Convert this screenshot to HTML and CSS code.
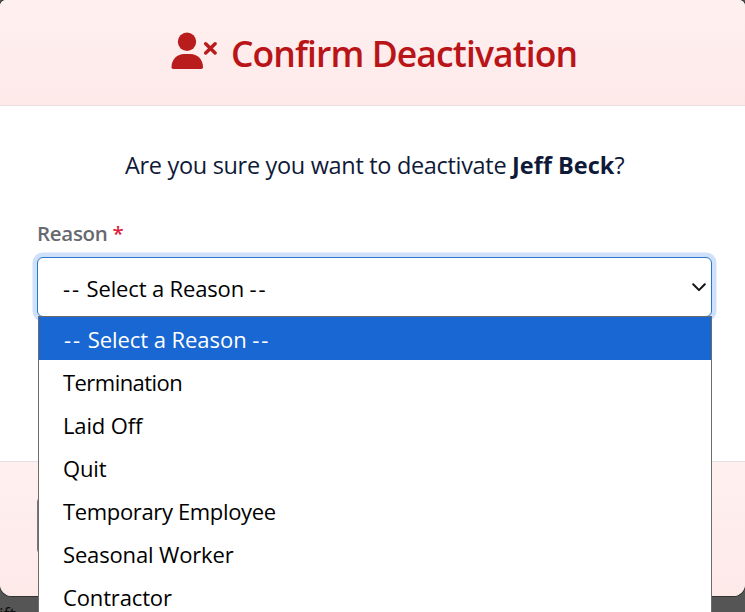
FILE: index.html
```html
<!DOCTYPE html>
<html lang="en">
<head>
<meta charset="utf-8">
<title>Confirm Deactivation</title>
<link rel="stylesheet" href="styles.css">
</head>
<body>
<div class="backdrop-text">ift</div>
<section class="modal">
  <header class="modal-header">
    <svg class="user-icon" viewBox="0 0 46 38" width="46" height="38" aria-hidden="true">
      <circle cx="16" cy="9.7" r="9.2"/>
      <path d="M.5 35.200C.5 27 6.500 22 13 22H19.500C26 22 32 27 32 35.200Q32 37 30.200 37H2.300Q.5 37 .5 35.200Z"/>
      <path class="cross" d="M34.700 11.700 44.100 21M44.100 11.700 34.700 21"/>
    </svg>
    <h1 class="title">Confirm Deactivation</h1>
  </header>
  <main class="modal-body">
    <p class="question"><span class="ask">Are you sure you want to deactivate</span> <strong>Jeff Beck</strong>?</p>
    <div class="label">Reason <span class="required">*</span></div>
    <div class="select">
      <span class="value"><span class="dash">--</span> Select a Reason <span class="dash">--</span></span>
      <svg class="chevron" viewBox="0 0 14 9" width="14" height="9" aria-hidden="true"><path d="M1.200 1.300 7 7.100 12.800 1.300"/></svg>
      <ul class="options">
        <li class="option selected"><span class="dash">--</span> Select a Reason <span class="dash">--</span></li>
        <li class="option tight">Termination</li>
        <li class="option">Laid Off</li>
        <li class="option">Quit</li>
        <li class="option snug">Temporary Employee</li>
        <li class="option">Seasonal Worker</li>
        <li class="option">Contractor</li>
      </ul>
    </div>
  </main>
  <footer class="modal-footer"><div class="cancel"></div></footer>
</section>
</body>
</html>
```
FILE: styles.css
```css
* { box-sizing: border-box; }
body {
  margin: 0;
  height: 612px;
  overflow: hidden;
  position: relative;
  background: #555;
  font-family: "Open Sans", "Noto Sans", sans-serif;
}
.backdrop-text {
  position: absolute;
  left: -1px;
  top: 604px;
  font-size: 18px;
  line-height: 20px;
  color: #111;
}
.modal {
  position: relative;
  height: 596px;
  display: flex;
  flex-direction: column;
  background: #fff;
  border-radius: 6px 6px 12px 12px;
  box-shadow: 0 0 0 1px #333;
}
.modal-header {
  height: 106px;
  padding: 32px 0 0 171px;
  display: flex;
  align-items: flex-start;
  background: linear-gradient(#fff0f0, #fee9e9);
  border-bottom: 1px solid #eadfe3;
  border-radius: 6px 6px 0 0;
}
.user-icon { fill: #b91c1c; flex: none; }
.cross { stroke: #b91c1c; stroke-width: 3.4; stroke-linecap: round; }
.title {
  margin: -4px 0 0 14px;
  font-size: 35.5px;
  line-height: 50px;
  font-weight: 560;
  letter-spacing: -0.9px;
  color: #b91418;
  white-space: nowrap;
}
.modal-body { height: 355px; padding: 41px 33px 0 37px; }
.question {
  margin: 0 0 0 88px;
  font-size: 23.5px;
  line-height: 36px;
  letter-spacing: -0.32px;
  color: #0f1a38;
  white-space: nowrap;
}
.question strong { font-weight: 700; letter-spacing: 0; }
.label {
  margin-top: 35px;
  font-size: 20.5px;
  line-height: 30px;
  height: 39px;
  font-weight: 550;
  letter-spacing: -0.3px;
  color: #666a70;
}
.required { color: #dc1f3c; }
.select {
  position: relative;
  height: 60px;
  padding: 0 5px 0 25px;
  display: flex;
  align-items: center;
  justify-content: space-between;
  border: 1px solid #2b78c8;
  border-radius: 6px;
  box-shadow: 0 0 0 4.500px #cfe0fb;
  font-size: 22px;
  letter-spacing: -0.15px;
  color: #000;
  background: #fff;
}
.value { padding-top: 2px; }
.dash { letter-spacing: 1.9px; }
.chevron { fill: none; stroke: #111; stroke-width: 2; stroke-linecap: round; stroke-linejoin: round; }
.options {
  position: absolute;
  left: 0;
  top: 58px;
  width: 674px;
  height: 320px;
  margin: 0;
  padding: 0;
  list-style: none;
  background: #fff;
  border: 1px solid #6b6b6b;
}
.option {
  height: 43px;
  padding: 1px 0 0 24px;
  line-height: 43px;
  white-space: nowrap;
}
.selected { background: #1967d2; color: #fff; padding-left: 25px; letter-spacing: -0.05px; }
.tight { letter-spacing: -0.55px; }
.snug { letter-spacing: -0.35px; }
.modal-footer {
  flex: 1;
  padding: 34px 0 0 37px;
  background: linear-gradient(#fff0f0, #fee9e9);
  border-top: 1px solid #e5dfe2;
  border-radius: 0 0 12px 12px;
}
.cancel { width: 120px; height: 59px; border: 1px solid #777; border-radius: 6px; }
```
